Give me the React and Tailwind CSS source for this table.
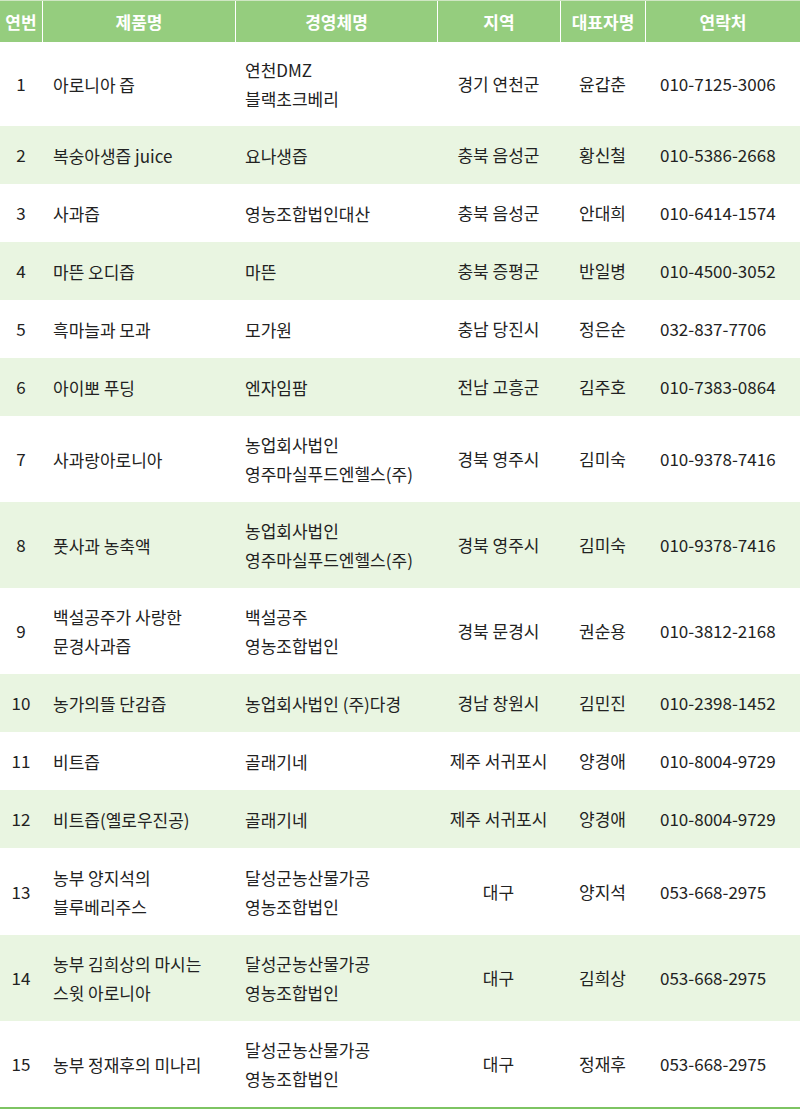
import React from "react";

const rows = [
  { no: 1, name: ["아로니아 즙"], company: ["연천DMZ", "블랙초크베리"], region: "경기 연천군", ceo: "윤갑춘", tel: "010-7125-3006", h: "h-[84px]" },
  { no: 2, name: ["복숭아생즙 juice"], company: ["요나생즙"], region: "충북 음성군", ceo: "황신철", tel: "010-5386-2668", h: "h-[58px]" },
  { no: 3, name: ["사과즙"], company: ["영농조합법인대산"], region: "충북 음성군", ceo: "안대희", tel: "010-6414-1574", h: "h-[58px]" },
  { no: 4, name: ["마뜬 오디즙"], company: ["마뜬"], region: "충북 증평군", ceo: "반일병", tel: "010-4500-3052", h: "h-[58px]" },
  { no: 5, name: ["흑마늘과 모과"], company: ["모가원"], region: "충남 당진시", ceo: "정은순", tel: "032-837-7706", h: "h-[58px]" },
  { no: 6, name: ["아이뽀 푸딩"], company: ["엔자임팜"], region: "전남 고흥군", ceo: "김주호", tel: "010-7383-0864", h: "h-[58px]" },
  { no: 7, name: ["사과랑아로니아"], company: ["농업회사법인", "영주마실푸드엔헬스(주)"], region: "경북 영주시", ceo: "김미숙", tel: "010-9378-7416", h: "h-[86px]" },
  { no: 8, name: ["풋사과 농축액"], company: ["농업회사법인", "영주마실푸드엔헬스(주)"], region: "경북 영주시", ceo: "김미숙", tel: "010-9378-7416", h: "h-[86px]" },
  { no: 9, name: ["백설공주가 사랑한", "문경사과즙"], company: ["백설공주", "영농조합법인"], region: "경북 문경시", ceo: "권순용", tel: "010-3812-2168", h: "h-[86px]" },
  { no: 10, name: ["농가의뜰 단감즙"], company: ["농업회사법인 (주)다경"], region: "경남 창원시", ceo: "김민진", tel: "010-2398-1452", h: "h-[58px]" },
  { no: 11, name: ["비트즙"], company: ["골래기네"], region: "제주 서귀포시", ceo: "양경애", tel: "010-8004-9729", h: "h-[58px]" },
  { no: 12, name: ["비트즙(옐로우진공)"], company: ["골래기네"], region: "제주 서귀포시", ceo: "양경애", tel: "010-8004-9729", h: "h-[58px]" },
  { no: 13, name: ["농부 양지석의", "블루베리주스"], company: ["달성군농산물가공", "영농조합법인"], region: "대구", ceo: "양지석", tel: "053-668-2975", h: "h-[87px]" },
  { no: 14, name: ["농부 김희상의 마시는", "스윗 아로니아"], company: ["달성군농산물가공", "영농조합법인"], region: "대구", ceo: "김희상", tel: "053-668-2975", h: "h-[86px]" },
  { no: 15, name: ["농부 정재후의 미나리"], company: ["달성군농산물가공", "영농조합법인"], region: "대구", ceo: "정재후", tel: "053-668-2975", h: "h-[86px]" },
];

const cols = "grid grid-cols-[42px_193px_202px_123px_85px_155px]";

function Lines({ items }) {
  return (
    <div className="leading-[29px]">
      {items.map((t, i) => (
        <div key={i}>{t}</div>
      ))}
    </div>
  );
}

export default function App() {
  return (
    <div className="w-[800px] bg-white font-['Noto_Sans_CJK_KR','Noto_Sans',sans-serif] text-[#222]">
      <div className={`${cols} h-[42px] bg-[#95cd7e] border-t border-[#cfe6c3] text-white font-bold text-[17px]`}>
        <div className="flex items-center justify-center">연번</div>
        <div className="flex items-center justify-center border-l border-white">제품명</div>
        <div className="flex items-center justify-center border-l border-white">경영체명</div>
        <div className="flex items-center justify-center border-l border-white">지역</div>
        <div className="flex items-center justify-center border-l border-white">대표자명</div>
        <div className="flex items-center justify-center border-l border-white">연락처</div>
      </div>
      {rows.map((r, i) => (
        <div
          key={r.no}
          className={`${cols} ${r.h} text-[17px] ${i % 2 === 1 ? "bg-[#e9f5e1]" : "bg-white"}`}
        >
          <div className="flex items-center justify-center">{r.no}</div>
          <div className="flex items-center pl-[11px]">
            <Lines items={r.name} />
          </div>
          <div className="flex items-center pl-[10px]">
            <Lines items={r.company} />
          </div>
          <div className="flex items-center justify-center">{r.region}</div>
          <div className="flex items-center justify-center">{r.ceo}</div>
          <div className="flex items-center pl-[15px]">{r.tel}</div>
        </div>
      ))}
      <div className="h-[2px] bg-[#7dc462]" />
    </div>
  );
}
